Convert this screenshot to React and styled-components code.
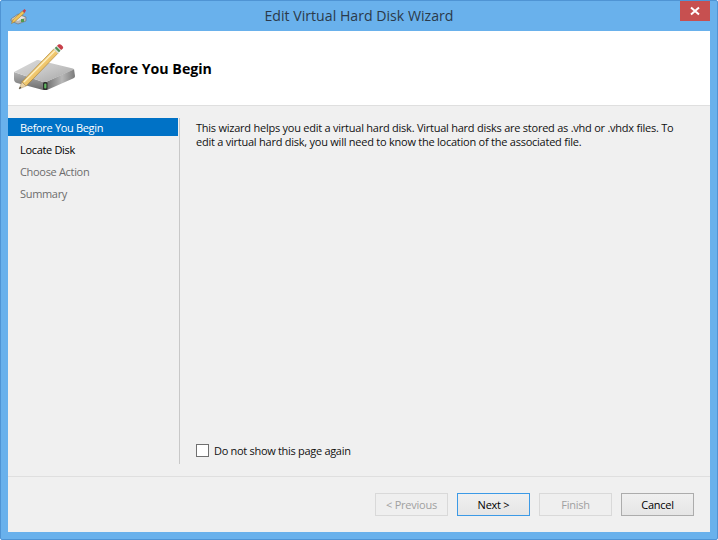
import React from "react";
import styled, { createGlobalStyle } from "styled-components";

const Global = createGlobalStyle`
  html, body {
    margin: 0;
    padding: 0;
    background: #fff;
  }
  body {
    font-family: "Open Sans", "Noto Sans", "Liberation Sans", sans-serif;
  }
`;

const Window = styled.div`
  width: 718px;
  height: 540px;
  box-sizing: border-box;
  display: flex;
  flex-direction: column;
  background: #69b1ec;
  border: 1px solid #4f94d4;
  border-radius: 2px;
  overflow: hidden;
`;

const TitleBar = styled.div`
  height: 30px;
  flex: none;
  display: grid;
  grid-template-columns: 1fr auto 1fr;
  align-items: start;
  padding: 0 7px;
`;

const TitleIcon = styled.svg`
  display: block;
  margin: 7px 0 0 2px;
`;

const TitleText = styled.div`
  font-size: 14.15px;
  line-height: 30px;
  color: #2b3a4a;
`;

const CloseButton = styled.div`
  justify-self: end;
  width: 30px;
  height: 20px;
  background: #c75050;
  display: flex;
  align-items: center;
  justify-content: center;
`;

const Client = styled.div`
  flex: 1;
  min-height: 0;
  margin: 0 7px 7px;
  display: flex;
  flex-direction: column;
  background: #f0f0f0;
`;

const Header = styled.div`
  height: 74px;
  flex: none;
  box-sizing: border-box;
  display: flex;
  align-items: center;
  background: #fff;
`;

const HeaderIcon = styled.svg`
  display: block;
  flex: none;
  margin-left: 3px;
`;

const HeaderTitle = styled.div`
  margin-left: 14px;
  font-size: 14.2px;
  font-weight: 700;
  color: #000;
`;

const Rule = styled.div`
  height: 1px;
  flex: none;
  background: #dfdfdf;
`;

const Main = styled.div`
  flex: 1;
  min-height: 0;
  display: flex;
  padding-top: 12px;
`;

const Sidebar = styled.div`
  width: 172px;
  flex: none;
  box-sizing: border-box;
  display: flex;
  flex-direction: column;
  gap: 4px;
  border-right: 1px solid #c8c8c8;
  padding-right: 1px;
  margin-bottom: 12px;
`;

const NavItem = styled.div`
  height: 18px;
  line-height: 20px;
  padding-left: 12px;
  font-size: 11px;
  letter-spacing: -0.32px;
  background: ${(p) => (p.$active ? "#0072c6" : "transparent")};
  color: ${(p) => (p.$active ? "#fff" : p.$muted ? "#6d6d6d" : "#000")};
`;

const Content = styled.div`
  flex: 1;
  min-width: 0;
  display: flex;
  flex-direction: column;
  justify-content: space-between;
  padding: 3px 32px 18px 16px;
`;

const Intro = styled.p`
  margin: 0;
  font-size: 11px;
  line-height: 14px;
  letter-spacing: -0.24px;
  color: #111;
`;

const CheckRow = styled.label`
  display: flex;
  align-items: center;
  gap: 5px;
  font-size: 11px;
  letter-spacing: -0.3px;
  color: #111;
`;

const CheckBox = styled.span`
  width: 13px;
  height: 13px;
  box-sizing: border-box;
  flex: none;
  background: #fff;
  border: 1px solid #707070;
`;

const Footer = styled.div`
  height: 55px;
  flex: none;
  box-sizing: border-box;
  display: flex;
  justify-content: flex-end;
  gap: 9px;
  padding: 16px 16px 0 0;
`;

const Button = styled.div`
  width: 73px;
  height: 23px;
  box-sizing: border-box;
  display: flex;
  align-items: center;
  justify-content: center;
  font-size: 11px;
  letter-spacing: -0.25px;
  color: ${(p) => (p.$disabled ? "#a0a0a0" : "#000")};
  background: ${(p) =>
    p.$disabled ? "#efefef" : "linear-gradient(#f0f0f0, #e5e5e5)"};
  border: 1px solid
    ${(p) => (p.$disabled ? "#d9d9d9" : p.$default ? "#3c9ae6" : "#acacac")};
`;

const SmallIcon = () => (
  <TitleIcon width="17" height="17" viewBox="0 0 17 17">
    <path d="M1 11 L8 6 L16 9 L16 13 L8 16 L1 13 Z" fill="#b9b9b9" stroke="#6e6e6e" strokeWidth="0.6" />
    <path d="M2 11 L8 7 L15 9.5 L8 13 Z" fill="#e4e4e4" />
    <rect x="11" y="11" width="3" height="3" fill="#4f9a4f" />
    <path d="M1.5 15.5 L3 11.5 L12.5 3 L14.5 5 L5 13.5 Z" fill="#f2c45a" stroke="#9a7420" strokeWidth="0.5" />
    <path d="M12.5 3 L14.5 1 L16 2.5 L14.5 5 Z" fill="#c8404a" />
  </TitleIcon>
);

const DiskPencil = () => (
  <HeaderIcon width="66" height="48" viewBox="0 0 66 48">
    <defs>
      <linearGradient id="diskTop" x1="0" y1="0" x2="1" y2="1">
        <stop offset="0" stopColor="#dcdcdc" />
        <stop offset="0.5" stopColor="#c6c6c6" />
        <stop offset="1" stopColor="#a4a4a4" />
      </linearGradient>
      <linearGradient id="diskRight" x1="0" y1="0" x2="1" y2="0">
        <stop offset="0" stopColor="#6e6e6e" />
        <stop offset="0.55" stopColor="#b8b8b8" />
        <stop offset="1" stopColor="#7a7a7a" />
      </linearGradient>
      <linearGradient id="diskLeft" x1="0" y1="0" x2="0" y2="1">
        <stop offset="0" stopColor="#b4b4b4" />
        <stop offset="1" stopColor="#6c6c6c" />
      </linearGradient>
      <linearGradient id="pencilBody" x1="0" y1="0" x2="1" y2="1">
        <stop offset="0" stopColor="#fbe3a0" />
        <stop offset="1" stopColor="#e5ac3e" />
      </linearGradient>
    </defs>
    <path d="M3 28 L32 38 L35 38 L36 46 L32 46 L6 39 C4 38.5 3 37 3 35 Z" fill="url(#diskLeft)" />
    <path d="M35 38 L63 25 L64 32 C64 33 63.5 34 62 34.5 L36 46 Z" fill="url(#diskRight)" />
    <path d="M3 28 L25 16.5 C26 16 27 16 28 16.2 L62 24.5 C63 25 63 25.5 62 26 L35 38 C34 38.5 33 38.5 32 38 Z" fill="url(#diskTop)" />
    <rect x="32" y="38" width="4.5" height="8" rx="1.5" fill="#2f2f2f" />
    <rect x="33.2" y="39.5" width="2.2" height="5" rx="1" fill="#5fb85f" />
    <path d="M10.9 37.9 L42.9 4.9 L47.1 9.1 L15.1 42.1 Z" fill="url(#pencilBody)" stroke="#a87a20" strokeWidth="0.6" />
    <path d="M12.5 37.6 L43.4 6.2 L44.4 7.2 L13.4 38.6 Z" fill="#fdf0c4" />
    <path d="M8 45 L10.9 37.9 L15.1 42.1 Z" fill="#e9d3a8" stroke="#a08050" strokeWidth="0.4" />
    <path d="M8 45 L9 42.6 L10.4 44 Z" fill="#3c3c3c" />
    <path d="M42.6 5.2 L46 1.8 L50.2 6 L46.8 9.4 Z" fill="#d8dcd4" />
    <path d="M43.8 4 L45.2 2.6 L49.4 6.8 L48 8.2 Z" fill="#4f8f55" />
    <path d="M46 1.8 L47.4 0.6 C48.4 0 49.4 0 50.4 1 L51.6 2.2 C52.4 3 52.4 4 51.6 4.8 L50.2 6 Z" fill="#c8404a" />
  </HeaderIcon>
);

const App = () => {
  return (
    <>
      <Global />
      <Window>
        <TitleBar>
          <SmallIcon />
          <TitleText>Edit Virtual Hard Disk Wizard</TitleText>
          <CloseButton>
            <svg width="10" height="10" viewBox="0 0 10 10">
              <path d="M1 1.5 L9 8.5 M9 1.5 L1 8.5" stroke="#fff" strokeWidth="2" />
            </svg>
          </CloseButton>
        </TitleBar>
        <Client>
          <Header>
            <DiskPencil />
            <HeaderTitle>Before You Begin</HeaderTitle>
          </Header>
          <Rule />
          <Main>
            <Sidebar>
              <NavItem $active>Before You Begin</NavItem>
              <NavItem>Locate Disk</NavItem>
              <NavItem $muted>Choose Action</NavItem>
              <NavItem $muted>Summary</NavItem>
            </Sidebar>
            <Content>
              <Intro>
                This wizard helps you edit a virtual hard disk. Virtual hard disks are stored as .vhd or .vhdx files. To edit a virtual hard disk, you will need to know the location of the associated file.
              </Intro>
              <CheckRow>
                <CheckBox />
                Do not show this page again
              </CheckRow>
            </Content>
          </Main>
          <Rule />
          <Footer>
            <Button $disabled>&lt; Previous</Button>
            <Button $default>Next &gt;</Button>
            <Button $disabled>Finish</Button>
            <Button>Cancel</Button>
          </Footer>
        </Client>
      </Window>
    </>
  );
};

export default App;
